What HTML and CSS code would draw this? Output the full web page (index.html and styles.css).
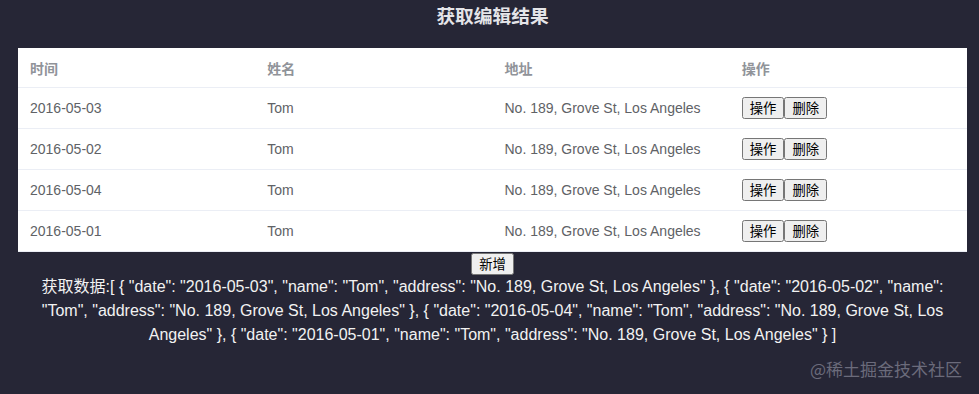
FILE: index.html
```html
<!DOCTYPE html>
<html lang="zh-CN">
<head>
    <meta charset="UTF-8">
    <meta name="viewport" content="width=device-width, initial-scale=1.0">
    <title>获取编辑结果</title>
    <link rel="stylesheet" href="styles.css">
</head>
<body>

    <div class="app">
        <h3 class="title">获取编辑结果</h3>

        <table class="data-table">
            <thead>
                <tr>
                    <th>时间</th>
                    <th>姓名</th>
                    <th>地址</th>
                    <th>操作</th>
                </tr>
            </thead>
            <tbody>
                <tr>
                    <td>2016-05-03</td>
                    <td>Tom</td>
                    <td>No. 189, Grove St, Los Angeles</td>
                    <td><button>操作</button><button>删除</button></td>
                </tr>
                <tr>
                    <td>2016-05-02</td>
                    <td>Tom</td>
                    <td>No. 189, Grove St, Los Angeles</td>
                    <td><button>操作</button><button>删除</button></td>
                </tr>
                <tr>
                    <td>2016-05-04</td>
                    <td>Tom</td>
                    <td>No. 189, Grove St, Los Angeles</td>
                    <td><button>操作</button><button>删除</button></td>
                </tr>
                <tr>
                    <td>2016-05-01</td>
                    <td>Tom</td>
                    <td>No. 189, Grove St, Los Angeles</td>
                    <td><button>操作</button><button>删除</button></td>
                </tr>
            </tbody>
        </table>

        <div class="add-row">
            <button>新增</button>
        </div>

        <p class="result">获取数据:[ { "date": "2016-05-03", "name": "Tom", "address": "No. 189, Grove St, Los Angeles" }, { "date": "2016-05-02", "name": "Tom", "address": "No. 189, Grove St, Los Angeles" }, { "date": "2016-05-04", "name": "Tom", "address": "No. 189, Grove St, Los Angeles" }, { "date": "2016-05-01", "name": "Tom", "address": "No. 189, Grove St, Los Angeles" } ]</p>
    </div>

    <div class="watermark">@稀土掘金技术社区</div>

</body>
</html>
```

FILE: styles.css
```css
body {
    margin: 0;
    background-color: #262636;
    font-family: "Liberation Sans", "Noto Sans CJK SC", sans-serif;
}

.app {
    padding: 0 12px 0 18px;
}

.title {
    margin: 0;
    padding: 3px 0 17px;
    text-align: center;
    font-size: 18.72px;
    line-height: 28px;
    color: #e4e4e8;
}

/* Tabla */
.data-table {
    width: 100%;
    table-layout: fixed;
    border-collapse: collapse;
    background-color: #fff;
    font-size: 14px;
    color: #606266;
}

.data-table th,
.data-table td {
    padding: 0 12px;
    text-align: left;
    border-bottom: 1px solid #ebeef5;
    white-space: nowrap;
}

.data-table th {
    height: 39px;
    color: #909399;
    font-weight: bold;
}

.data-table td {
    height: 40px;
}

button {
    font-family: "Noto Sans CJK SC", sans-serif;
    font-size: 13.33px;
    line-height: 16px;
    padding: 1px 6px;
    color: #000;
}

/* Botón nuevo */
.add-row {
    text-align: center;
    padding-top: 1px;
    line-height: 0;
}

.result {
    margin: 0;
    text-align: center;
    font-size: 16px;
    line-height: 24px;
    color: #f2f2f2;
}

.watermark {
    position: absolute;
    right: 17px;
    top: 356px;
    font-size: 17px;
    color: #6b6b7b;
    font-family: "Noto Sans CJK SC", sans-serif;
}
```
